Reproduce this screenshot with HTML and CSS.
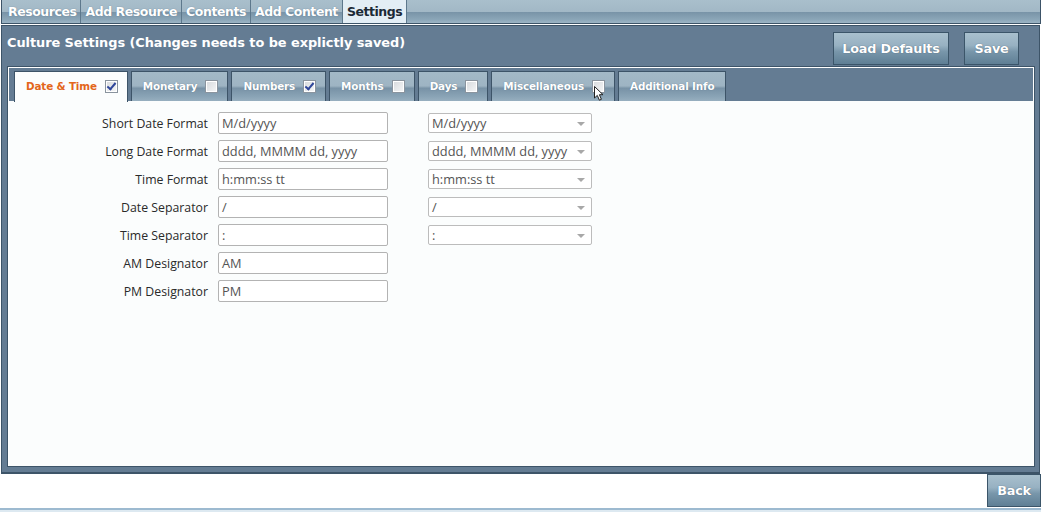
FILE: index.html
```html
<!DOCTYPE html>
<html>
<head>
<meta charset="utf-8">
<link rel="stylesheet" href="styles.css">
</head>
<body>
<div class="topnav">
  <span class="ntab">Resources</span>
  <span class="ntab">Add Resource</span>
  <span class="ntab">Contents</span>
  <span class="ntab">Add Content</span>
  <span class="ntab active">Settings</span>
</div>
<div class="panel">
  <div class="panel-head">
    <div class="title">Culture Settings (Changes needs to be explictly saved)</div>
    <div class="actions">
      <button class="btn btn-load">Load Defaults</button>
      <button class="btn btn-save">Save</button>
    </div>
  </div>
  <div class="inner">
    <div class="inner-body">
      <div class="subtabs">
        <div class="stab active"><span>Date &amp; Time</span><i class="cb checked"></i></div>
        <div class="stab"><span>Monetary</span><i class="cb"></i></div>
        <div class="stab"><span>Numbers</span><i class="cb checked"></i></div>
        <div class="stab"><span>Months</span><i class="cb"></i></div>
        <div class="stab"><span>Days</span><i class="cb"></i></div>
        <div class="stab misc"><span>Miscellaneous</span><i class="cb"></i>
          <svg class="cursor" width="12" height="16" viewBox="0 0 12 16"><path d="M0.5 0.5 L0.5 12 L3.3 9.4 L5.4 14.2 L7.4 13.3 L5.4 8.7 L9 8.7 Z" fill="#fff" stroke="#222" stroke-width="1"/></svg>
        </div>
        <div class="stab wide"><span>Additional Info</span></div>
      </div>
      <div class="content">
        <div class="form">
          <label>Short Date Format</label><div class="inp">M/d/yyyy</div><div class="sel">M/d/yyyy<b></b></div>
          <label>Long Date Format</label><div class="inp">dddd, MMMM dd, yyyy</div><div class="sel">dddd, MMMM dd, yyyy<b></b></div>
          <label>Time Format</label><div class="inp">h:mm:ss tt</div><div class="sel">h:mm:ss tt<b></b></div>
          <label>Date Separator</label><div class="inp">/</div><div class="sel">/<b></b></div>
          <label>Time Separator</label><div class="inp">:</div><div class="sel">:<b></b></div>
          <label>AM Designator</label><div class="inp">AM</div><div></div>
          <label>PM Designator</label><div class="inp">PM</div><div></div>
        </div>
      </div>
    </div>
  </div>
</div>
<div class="footer">
  <button class="btn btn-back">Back</button>
</div>
<div class="bottomline"></div>
</body>
</html>
```
FILE: styles.css
```css
* { box-sizing: border-box; }
html, body { margin: 0; padding: 0; }
body {
  width: 1041px;
  height: 512px;
  overflow: hidden;
  background: #fff;
  font-family: "DejaVu Sans", Verdana, sans-serif;
}
.topnav {
  margin-left: 1px;
  width: 1040px;
  height: 24px;
  border: 1px solid #3d5468;
  border-top: 0;
  padding-left: 2px;
  display: flex;
  background: linear-gradient(#a9bfcc 0%, #a2b8c6 50%, #7994a8 54%, #8ba6b8 85%, #9cb4c4 100%);
}
.ntab {
  font-weight: bold;
  font-size: 12.5px;
  color: #fff;
  line-height: 23px;
  padding: 0 4px;
  border-right: 1px solid #5d788c;
  text-shadow: 0 0 1px #5b7487;
  letter-spacing: -0.45px;
}
.ntab.active {
  background: #e3eef5;
  color: #1c2a36;
  text-shadow: none;
}
.panel {
  margin: 1px 0 0 1px;
  width: 1039px;
  height: 449px;
  border: 1px solid #3d5468;
  border-bottom-width: 2px;
  background: #647c93;
  display: flex;
  flex-direction: column;
}
.panel-head {
  height: 40px;
  display: flex;
  justify-content: space-between;
  align-items: flex-start;
}
.title {
  color: #fff;
  font-weight: bold;
  font-size: 12.9px;
  padding: 9px 0 0 5px;
  letter-spacing: -0.05px;
}
.actions {
  display: flex;
  gap: 15px;
  padding: 6px 20px 0 0;
}
.btn {
  height: 33px;
  border: 1px solid #3b5569;
  background: linear-gradient(#a9c0ce 0%, #97b1c2 40%, #7896aa 60%, #5f7f95 100%);
  color: #fff;
  font-family: "DejaVu Sans", Verdana, sans-serif;
  font-weight: bold;
  font-size: 12.8px;
  text-shadow: 0 0 1px #3d5468;
  padding: 0;
  letter-spacing: -0.2px;
}
.btn-load { width: 116px; }
.btn-save { width: 55px; }
.inner {
  margin: 0 4px 5px 5px;
  flex: 1;
  border: 1px solid #3d5468;
}
.inner-body {
  height: 100%;
  border: 1px solid #fff;
  border-bottom: 0;
  display: flex;
  flex-direction: column;
}
.subtabs {
  background: #647c93;
  padding: 3px 0 0 5px;
  display: flex;
  gap: 3px;
  height: 33px;
}
.stab {
  position: relative;
  height: 30px;
  border: 1px solid #3d5468;
  border-bottom: 0;
  background: linear-gradient(#a3b9c7 0%, #9eb4c3 48%, #7892a6 56%, #8aa4b6 85%, #97afbf 100%);
  display: flex;
  align-items: center;
  padding: 0 9px 1px 11px;
  gap: 8px;
  color: #fff;
  font-weight: bold;
  font-size: 10.4px;
  text-shadow: 0 0 1px #5b7487;
  letter-spacing: -0.15px;
}
.stab.wide { padding: 0 11px 1px; }
.stab.active {
  background: #fbfdfd;
  color: #e3661b;
  text-shadow: none;
  height: 31px;
  margin-bottom: -1px;
  padding-bottom: 2px;
}
.cb {
  display: block;
  width: 13px;
  height: 13px;
  border: 1px solid #8a949e;
  background: linear-gradient(135deg, #d6d9dc, #f6f7f8);
  box-shadow: inset 0 0 0 1px #fff;
  position: relative;
}
.cb.checked::after {
  content: "";
  position: absolute;
  left: 3px;
  top: 0px;
  width: 3px;
  height: 7px;
  border-right: 2px solid #2f469a;
  border-bottom: 2px solid #2f469a;
  transform: rotate(40deg);
}
.cursor {
  position: absolute;
  left: 102px;
  top: 14px;
}
.content {
  flex: 1;
  background: #fbfdfd;
  padding-top: 11px;
}
.form {
  display: grid;
  grid-template-columns: 199px 170px 164px;
  column-gap: 10px;
  row-gap: 6px;
  grid-auto-rows: 22px;
  align-items: center;
}
.form .sel { margin-left: 30px; }
label {
  text-align: right;
  font-family: "Open Sans", sans-serif;
  font-size: 12.3px;
  color: #2a2a2a;
}
.inp, .sel {
  font-family: "Open Sans", sans-serif;
  font-size: 12.8px;
  color: #555;
  border: 1px solid #b3b3b3;
  border-radius: 2px;
  background: #fff;
  padding: 0 3px;
  white-space: nowrap;
}
.inp { height: 22px; line-height: 20px; }
.sel {
  height: 20px;
  line-height: 18px;
  position: relative;
  width: 164px;
  border-color: #bcbcbc;
}
.sel b {
  position: absolute;
  right: 6px;
  top: 8px;
  border-left: 4px solid transparent;
  border-right: 4px solid transparent;
  border-top: 4px solid #a8a8a8;
}
.footer {
  display: flex;
  justify-content: flex-end;
  height: 34px;
}
.btn-back { width: 54px; margin-top: 0; }
.bottomline {
  height: 4px;
  border-top: 2px solid #9dbad0;
  background: #dde9f1;
}
```
